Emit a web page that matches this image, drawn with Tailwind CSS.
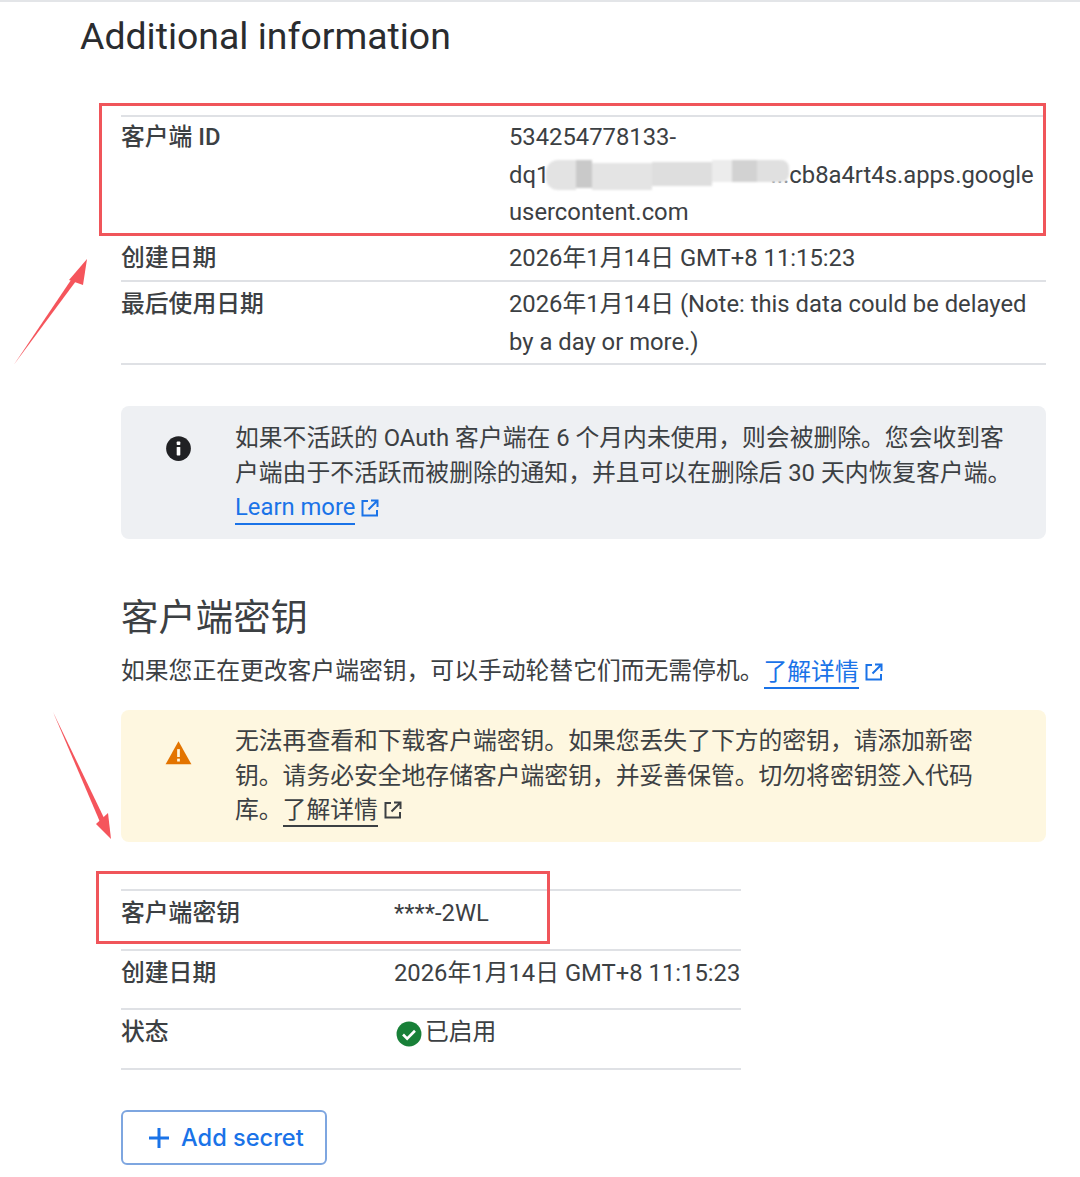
<!DOCTYPE html>
<html lang="en">
<head>
    <meta charset="UTF-8">
    <title>Additional information</title>
    <script src="https://cdn.jsdelivr.net/npm/@tailwindcss/browser@4"></script>
</head>
<body class="bg-white">
<div class="relative w-[1080px] h-[1177px] overflow-hidden border-t-2 border-[#e3e5e8] font-['Roboto','Noto_Sans_CJK_SC',sans-serif] text-[23.8px] text-[#3c4043]">

    <h1 class="pl-[80px] pt-[12px] h-[113px] text-[37.4px] leading-[44px] text-[#2a2c2f]">Additional information</h1>

    <div class="ml-[121px] mr-[34px]">
        <!-- client info table -->
        <div class="border-t-2 border-[#dfe1e5]">
            <div class="flex h-[119px] border-b-2 border-[#dfe1e5] leading-[37.5px] pt-[2px]">
                <div class="w-[388px] font-medium">客户端 ID</div>
                <div>
                    <div>534254778133-</div>
                    <div>dq1<span class="inline-block w-[240px] text-right text-[#8f9499]">...</span>cb8a4rt4s.apps.google</div>
                    <div>usercontent.com</div>
                </div>
            </div>
            <div class="flex h-[46px] border-b-2 border-[#dfe1e5] leading-[37.5px] pt-[4px]">
                <div class="w-[388px] font-medium">创建日期</div>
                <div>2026年1月14日 GMT+8 11:15:23</div>
            </div>
            <div class="flex h-[83px] border-b-2 border-[#dfe1e5] leading-[37.5px] pt-[4px]">
                <div class="w-[388px] font-medium">最后使用日期</div>
                <div>2026年1月14日 (Note: this data could be delayed<br>by a day or more.)</div>
            </div>
        </div>

        <!-- info callout -->
        <div class="flex mt-[41px] h-[133px] rounded-lg bg-[#eef0f3] pt-[15px] leading-[34.5px]">
            <div class="w-[114px] shrink-0 pl-[44px] pt-[14px]">
                <svg class="w-[27px] h-[27px]" viewBox="0 0 24 24"><circle cx="12" cy="12" r="11" fill="#202124"/><rect x="10.4" y="10.6" width="3.2" height="7.6" rx=".6" fill="#fff"/><rect x="10.4" y="5.8" width="3.2" height="3" rx=".6" fill="#fff"/></svg>
            </div>
            <div>
                <div>如果不活跃的 OAuth 客户端在 6 个月内未使用，则会被删除。您会收到客</div>
                <div>户端由于不活跃而被删除的通知，并且可以在删除后 30 天内恢复客户端。</div>
                <div class="flex items-center text-[#1a73e8]">
                    <a class="border-b-2 border-[#1a73e8] leading-[31px] mt-[2px]">Learn more</a>
                    <svg class="ml-[5px] w-[20px] h-[20px]" viewBox="0 0 20 20" fill="none" stroke="#1a73e8" stroke-width="2"><path d="M8 3H2.5v14.5H17V12M11 2.500h6.500V9M17.500 2.500 8.500 11.500"/></svg>
                </div>
            </div>
        </div>

        <h2 class="mt-[55px] text-[37.4px] leading-[48px] text-[#3c4043]">客户端密钥</h2>
        <div class="flex items-center mt-[12px] h-[36px]">
            <span>如果您正在更改客户端密钥，可以手动轮替它们而无需停机。</span>
            <a class="border-b-2 border-[#1a73e8] leading-[30px] text-[#1a73e8] mt-[1px]">了解详情</a>
            <svg class="ml-[5px] w-[20px] h-[20px]" viewBox="0 0 20 20" fill="none" stroke="#1a73e8" stroke-width="2"><path d="M8 3H2.500v14.500H17V12M11 2.500h6.500V9M17.500 2.500 8.500 11.500"/></svg>
        </div>

        <!-- warning callout -->
        <div class="flex mt-[20px] h-[132px] rounded-lg bg-[#fef7e0] pt-[14px] leading-[34.5px]">
            <div class="w-[114px] shrink-0 pl-[44px] pt-[15px]">
                <svg class="w-[27px] h-[27px]" viewBox="0 0 24 24"><path d="M12 2 23.500 22.500H.5Z" fill="#e37400"/><rect x="10.800" y="9" width="2.400" height="7" fill="#fef7e0"/><rect x="10.800" y="17.500" width="2.400" height="2.500" fill="#fef7e0"/></svg>
            </div>
            <div>
                <div>无法再查看和下载客户端密钥。如果您丢失了下方的密钥，请添加新密</div>
                <div>钥。请务必安全地存储客户端密钥，并妥善保管。切勿将密钥签入代码</div>
                <div class="flex items-center">
                    <span>库。</span>
                    <a class="border-b-2 border-[#3c4043] leading-[30px] mt-[1px]">了解详情</a>
                    <svg class="ml-[5px] w-[20px] h-[20px]" viewBox="0 0 20 20" fill="none" stroke="#3c4043" stroke-width="2"><path d="M8 3H2.500v14.500H17V12M11 2.500h6.500V9M17.500 2.500 8.500 11.500"/></svg>
                </div>
            </div>
        </div>

        <!-- secret table -->
        <div class="mt-[47px] w-[620px] border-t-2 border-[#dfe1e5] leading-[37.500px]">
            <div class="flex h-[60px] border-b-2 border-[#dfe1e5] pt-[4px]">
                <div class="w-[273px] font-medium">客户端密钥</div>
                <div>****-2WL</div>
            </div>
            <div class="flex h-[59px] border-b-2 border-[#dfe1e5] pt-[4px]">
                <div class="w-[273px] font-medium">创建日期</div>
                <div>2026年1月14日 GMT+8 11:15:23</div>
            </div>
            <div class="flex h-[60px] border-b-2 border-[#dfe1e5] pt-[4px]">
                <div class="w-[273px] font-medium">状态</div>
                <div class="flex items-center h-[37px]">
                    <svg class="ml-[2px] mr-[3px] mt-[3px] w-[26px] h-[26px]" viewBox="0 0 24 24"><circle cx="12" cy="12" r="11.500" fill="#188038"/><path d="M6.500 12.500 10.300 16.300 17.500 9" fill="none" stroke="#fff" stroke-width="2.400"/></svg>
                    <span>已启用</span>
                </div>
            </div>
        </div>

        <button class="flex items-center mt-[40px] w-[206px] h-[55px] rounded-md border-2 border-[#7ea6e0] pl-[25px] text-[#1a73e8] font-medium font-['Inter','Roboto',sans-serif]">
            <svg class="w-[22px] h-[22px] mr-[11px]" viewBox="0 0 22 22" fill="none" stroke="#1a73e8" stroke-width="3"><path d="M11 1v20M1 11h20"/></svg>
            <span class="text-[23.6px]">Add secret</span>
        </button>
    </div>

    <!-- screenshot annotations -->
    <div class="absolute left-[99px] top-[101px] w-[947px] h-[133px] border-[3px] border-[#f0555a]"></div>
    <div class="absolute left-[96px] top-[869px] w-[454px] h-[73px] border-[3px] border-[#f0555a]"></div>
    <svg class="absolute left-0 top-[-2px] w-[1080px] h-[1177px] pointer-events-none" viewBox="0 0 1080 1177">
        <path d="M14 364.500 75 274 79 277Z" fill="#f5555c"/>
        <path d="M87 259 69 280 83 285Z" fill="#f5555c"/>
        <path d="M53 712 100 822 105 820Z" fill="#f5555c"/>
        <path d="M111 839 96 824 108 813Z" fill="#f5555c"/>
    </svg>

    <!-- blurred part of the client id -->
    <div class="absolute left-[546px] top-[158px] w-[243px] h-[30px] blur-[1px] flex">
        <div class="w-[30px] h-[30px] bg-[#e3e3e3] rounded-l-xl"></div>
        <div class="w-[16px] h-[28px] bg-[#c9c9c9]"></div>
        <div class="w-[60px] h-[27px] mt-[3px] bg-[#e4e4e4]"></div>
        <div class="w-[60px] h-[24px] mt-[2px] bg-[#dedede]"></div>
        <div class="w-[20px] h-[22px] bg-[#ececec]"></div>
        <div class="w-[25px] h-[22px] bg-[#d2d2d2]"></div>
        <div class="w-[32px] h-[22px] bg-[#e0e0e0] rounded-r-lg"></div>
    </div>
</div>
</body>
</html>
